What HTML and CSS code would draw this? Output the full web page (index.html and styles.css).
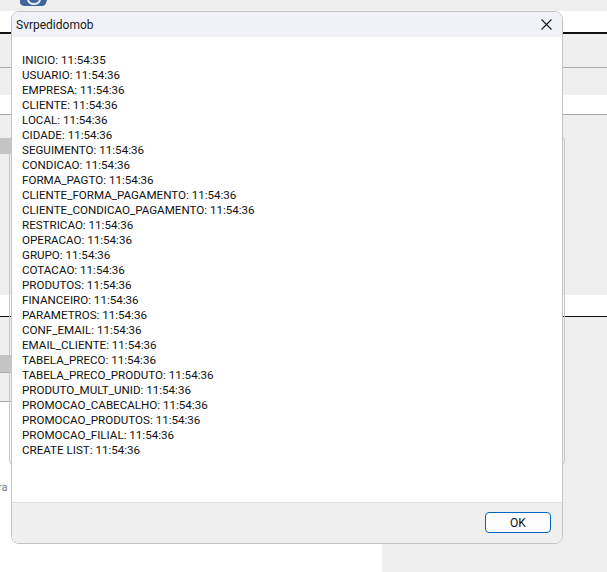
FILE: index.html
```html
<!DOCTYPE html>
<html lang="pt">
<head>
<meta charset="utf-8">
<title>Svrpedidomob</title>
<link rel="stylesheet" href="styles.css">
</head>
<body>
<div class="page">
  <div class="top">
    <svg class="logo" width="30" height="8" viewBox="0 0 30 8"><path d="M1 0h27l-1 3q-1 3-4 3H6Q2 6 1 3z" fill="#3f649c"/><path d="M9 0q1 4 6 4t6-4" fill="none" stroke="#e8edf4" stroke-width="2"/></svg>
  </div>
  <div class="bar"></div>
  <div class="gray-a"></div>
  <div class="gray-b">
    <div class="split"><div class="cell"></div></div>
  </div>
  <div class="gray-c">
    <div class="head"></div>
  </div>
  <div class="bar second"></div>
  <div class="gray-d">
    <div class="head"></div>
    <div class="row"></div>
  </div>
  <div class="bottom">
    <div class="left"><span class="cut">ra</span></div>
    <div class="right"></div>
  </div>
  <div class="panel"></div>
</div>
<div class="dialog">
  <div class="title">
    <span>Svrpedidomob</span>
    <svg class="close" width="11" height="11" viewBox="0 0 11 11"><path d="M.5.5l10 10M10.5.5l-10 10" stroke="#1a1a1a" stroke-width="1.1" fill="none"/></svg>
  </div>
  <div class="content">
    <div>INICIO: 11:54:35</div>
    <div>USUARIO: 11:54:36</div>
    <div>EMPRESA: 11:54:36</div>
    <div>CLIENTE: 11:54:36</div>
    <div>LOCAL: 11:54:36</div>
    <div>CIDADE: 11:54:36</div>
    <div>SEGUIMENTO: 11:54:36</div>
    <div>CONDICAO: 11:54:36</div>
    <div>FORMA_PAGTO: 11:54:36</div>
    <div>CLIENTE_FORMA_PAGAMENTO: 11:54:36</div>
    <div>CLIENTE_CONDICAO_PAGAMENTO: 11:54:36</div>
    <div>RESTRICAO: 11:54:36</div>
    <div>OPERACAO: 11:54:36</div>
    <div>GRUPO: 11:54:36</div>
    <div>COTACAO: 11:54:36</div>
    <div>PRODUTOS: 11:54:36</div>
    <div>FINANCEIRO: 11:54:36</div>
    <div>PARAMETROS: 11:54:36</div>
    <div>CONF_EMAIL: 11:54:36</div>
    <div>EMAIL_CLIENTE: 11:54:36</div>
    <div>TABELA_PRECO: 11:54:36</div>
    <div>TABELA_PRECO_PRODUTO: 11:54:36</div>
    <div>PRODUTO_MULT_UNID: 11:54:36</div>
    <div>PROMOCAO_CABECALHO: 11:54:36</div>
    <div>PROMOCAO_PRODUTOS: 11:54:36</div>
    <div>PROMOCAO_FILIAL: 11:54:36</div>
    <div>CREATE LIST: 11:54:36</div>
  </div>
  <div class="footer"><button class="ok" type="button">OK</button></div>
</div>
</body>
</html>
```
FILE: styles.css
```css
* { box-sizing: border-box; }
html, body { margin: 0; height: 100%; overflow: hidden; background: #fff; }
body { position: relative; width: 607px; height: 572px; font-family: Roboto, "Liberation Sans", sans-serif; }
.page { display: flex; flex-direction: column; height: 572px; position: relative; }
.top { height: 11px; background: #efefef; padding-left: 19px; overflow: hidden; }
.logo { display: block; }
.bar { height: 23px; background: #fff; border-bottom: 2px solid #111; }
.gray-a { height: 34px; background: #efefef; border-bottom: 1px solid #a8a8a8; }
.gray-b { height: 47px; background: #efefef; padding-top: 27px; }
.cell { height: 20px; background: #fff; border-bottom: 1px solid #a8a8a8; }
.gray-c { height: 180px; background: #efefef; padding-top: 23px; }
.head { width: 40px; height: 16px; background: #c4c4c4; }
.second { height: 22px; border-bottom-width: 1px; }
.gray-d { height: 85px; background: #efefef; padding-top: 38px; }
.gray-d .head { height: 17px; }
.row { height: 30px; border-top: 1px solid #a8a8a8; border-bottom: 1px solid #a8a8a8; width: 40px; }
.bottom { flex: 1; display: flex; }
.left { width: 382px; background: #fff; padding-top: 79px; }
.cut { display: block; font-size: 11px; line-height: 14px; color: #777; margin-left: -2px; }
.right { flex: 1; background: #efefef; }
.panel { position: absolute; left: 9px; top: 135px; width: 556px; height: 331px; border: 1px solid #c8c8c8; border-radius: 6px; }
.dialog { position: absolute; left: 11px; top: 11px; width: 552px; height: 533px; display: flex; flex-direction: column; background: #fff; border: 1px solid #c4c4c4; border-radius: 8px; overflow: hidden; }
.title { flex: none; height: 25px; background: #f0f2f8; display: flex; align-items: center; justify-content: space-between; padding: 0 10px 0 4px; font-size: 12px; color: #1a1a1a; }
.close { display: block; }
.content { flex: 1; padding: 16px 10px 0; font-size: 11.6px; line-height: 15px; color: #111; white-space: nowrap; }
.footer { flex: none; height: 41px; background: #f0f0f0; border-top: 1px solid #dfdfdf; display: flex; justify-content: flex-end; padding: 9px 11px 0 0; }
.ok { width: 66px; height: 21px; padding: 0; background: #fdfdfd; border: 1.5px solid #0067c0; border-radius: 4px; font: inherit; font-size: 12px; color: #111; }
```
